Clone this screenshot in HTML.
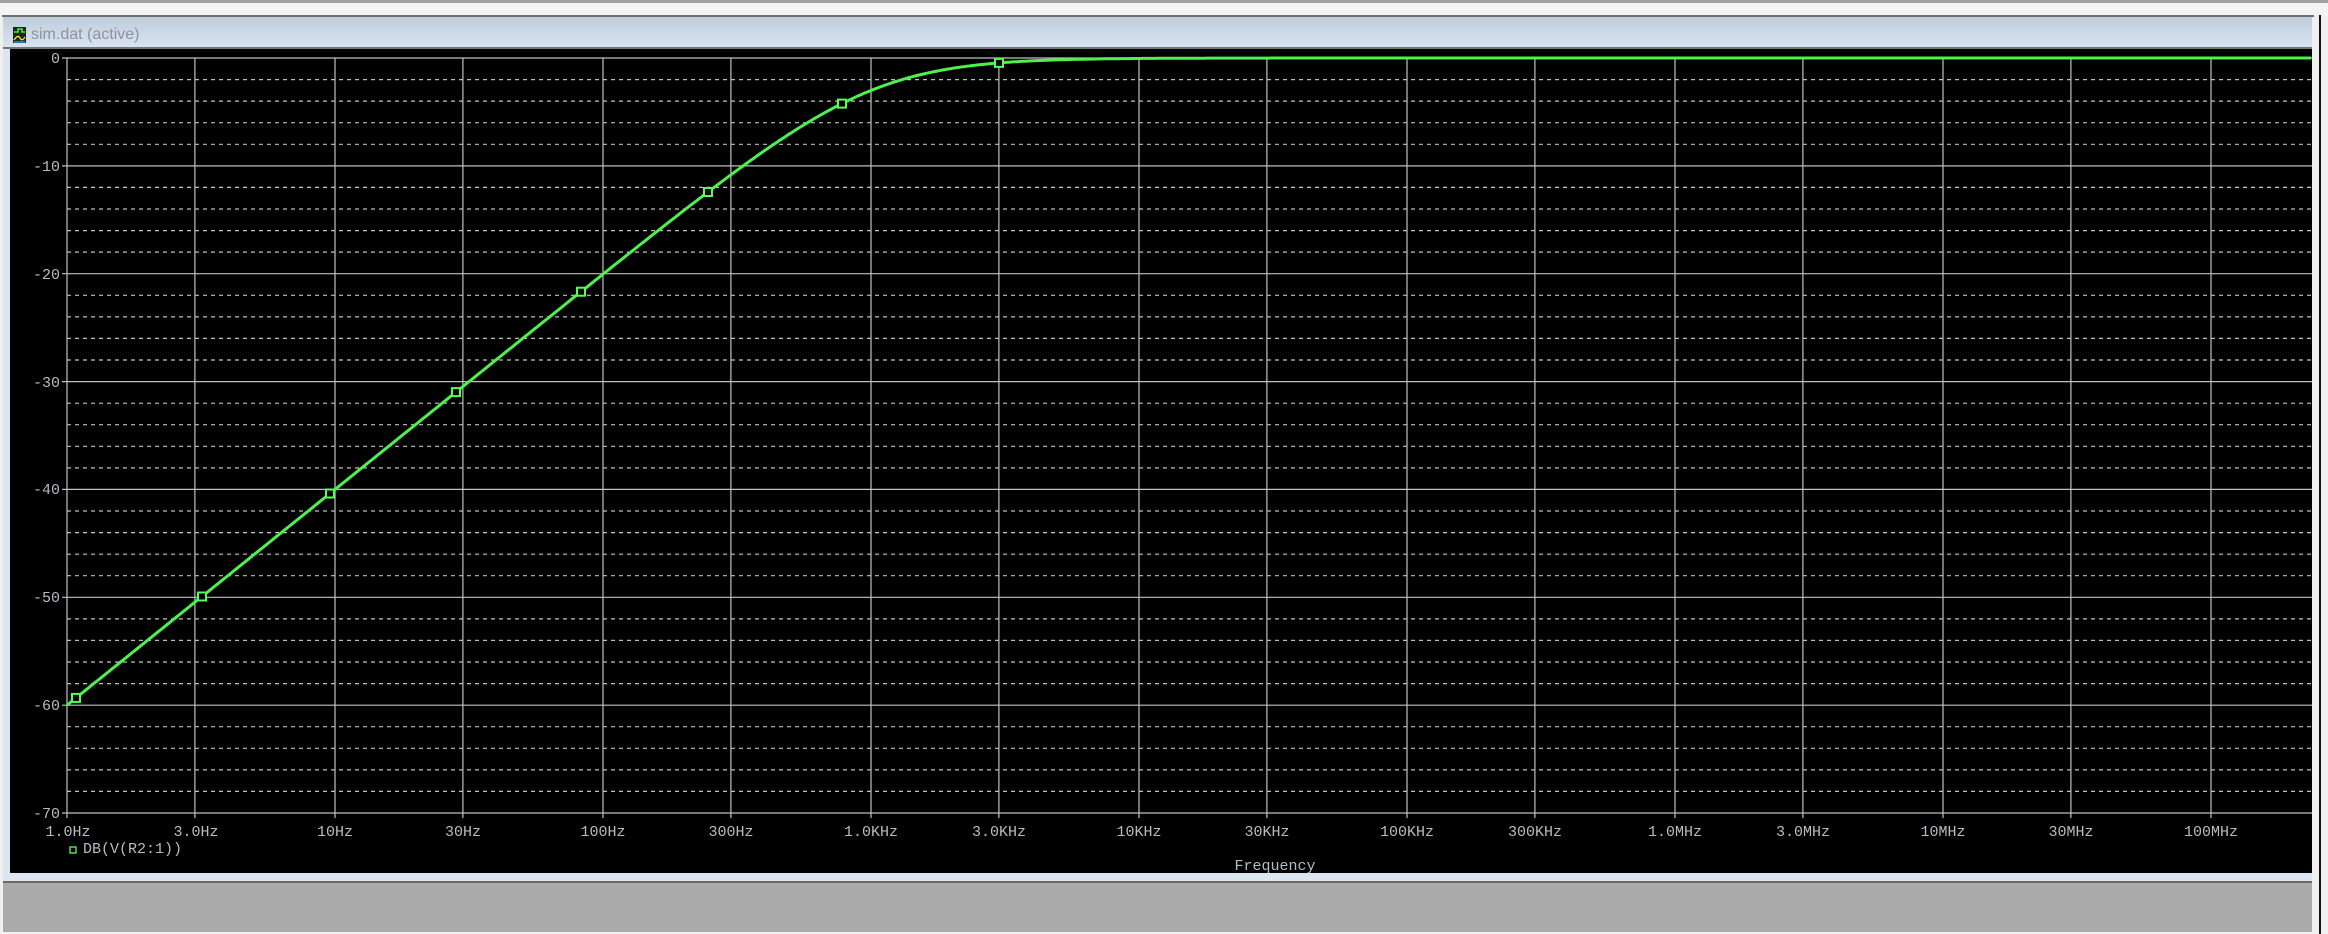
<!DOCTYPE html>
<html><head><style>
html,body{margin:0;padding:0;width:2328px;height:934px;overflow:hidden;background:#f0f0f0;font-family:"Liberation Sans",sans-serif}
</style></head><body>
<svg id="s" width="2328" height="934" xmlns="http://www.w3.org/2000/svg" style="position:absolute;left:0;top:0">
<rect x="0" y="0" width="2328" height="3" fill="#a0a0a0"/>
<rect x="0" y="3" width="2328" height="12" fill="#f4f4f4"/>
<rect x="0" y="15" width="2314" height="919" fill="#f0f0f0"/>
<rect x="2" y="15" width="2312" height="2" fill="#6e6e6e"/>
<defs><linearGradient id="tg" x1="0" y1="0" x2="0" y2="1"><stop offset="0" stop-color="#bfcddb"/><stop offset="1" stop-color="#d9e5f1"/></linearGradient></defs>
<rect x="3" y="17" width="2309" height="32" fill="url(#tg)"/>
<rect x="3" y="47" width="2309" height="2" fill="#777"/>
<rect x="2319" y="15" width="2" height="919" fill="#111"/>
<rect x="2321" y="15" width="7" height="919" fill="#f0f0f0"/>
<rect x="3" y="49" width="7" height="833" fill="#dce6f0"/>
<rect x="10" y="49" width="2302" height="824" fill="#000"/>
<rect x="3" y="873" width="2309" height="8" fill="#dce6f0"/>
<rect x="3" y="881" width="2309" height="2" fill="#6a6a6a"/>
<rect x="3" y="883" width="2309" height="49" fill="#ababab"/>
<g transform="translate(13,27)">
<rect x="0" y="0" width="13" height="16" fill="#222"/>
<path d="M1 5h4v-3h4v3h3" stroke="#3f3" stroke-width="1.5" fill="none"/>
<path d="M1 13q4-6 6-2t5-1" stroke="#ff0" stroke-width="1.2" fill="none"/>
<path d="M1 15h11" stroke="#0cf" stroke-width="1.2"/>
</g>
<text x="31" y="39" font-size="16" fill="#8d939a" font-family="Liberation Sans, sans-serif">sim.dat (active)</text>
<g id="grid"></g>
<g font-family="Liberation Mono, monospace" font-size="15" fill="#b4bcc4">
<text x="60" y="63" text-anchor="end">0</text>
<text x="60" y="171" text-anchor="end">-10</text>
<text x="60" y="279" text-anchor="end">-20</text>
<text x="60" y="387" text-anchor="end">-30</text>
<text x="60" y="494" text-anchor="end">-40</text>
<text x="60" y="602" text-anchor="end">-50</text>
<text x="60" y="710" text-anchor="end">-60</text>
<text x="60" y="818" text-anchor="end">-70</text>
<g text-anchor="middle">
<text x="68" y="836">1.0Hz</text><text x="196" y="836">3.0Hz</text>
<text x="335" y="836">10Hz</text><text x="463" y="836">30Hz</text>
<text x="603" y="836">100Hz</text><text x="731" y="836">300Hz</text>
<text x="871" y="836">1.0KHz</text><text x="999" y="836">3.0KHz</text>
<text x="1139" y="836">10KHz</text><text x="1267" y="836">30KHz</text>
<text x="1407" y="836">100KHz</text><text x="1535" y="836">300KHz</text>
<text x="1675" y="836">1.0MHz</text><text x="1803" y="836">3.0MHz</text>
<text x="1943" y="836">10MHz</text><text x="2071" y="836">30MHz</text>
<text x="2211" y="836">100MHz</text>
<text x="1275" y="870">Frequency</text>
</g>
<text x="83" y="853">DB(V(R2:1))</text>
</g>
<rect x="70" y="847" width="6" height="6" fill="none" stroke="#5f5" stroke-width="1.3"/>
<g id="curve"></g>
</svg>
<script>
var X0=67,D=268,Y0=58,K=10.786,R=2312,B=813;
var g=document.getElementById('grid'),h='';
for(var i=0;i<=35;i++){var y=(Y0+i*K*2).toFixed(1);
 if(i%5==0)h+='<line x1="62" x2="'+R+'" y1="'+y+'" y2="'+y+'" stroke="#c0c0c0" stroke-width="1.2"/>';
 else h+='<line x1="'+X0+'" x2="'+R+'" y1="'+y+'" y2="'+y+'" stroke="#c0c0c0" stroke-width="1.2" stroke-dasharray="4 4"/>';}
for(var d=0;d<9;d++){[1,3].forEach(function(m){var x=X0+D*(d+Math.log10(m));if(x>R)return;
 h+='<line x1="'+x.toFixed(1)+'" x2="'+x.toFixed(1)+'" y1="'+Y0+'" y2="'+(B+5)+'" stroke="#c0c0c0" stroke-width="1.2"/>';});}
g.innerHTML=h;
function yy(f){var db=20*Math.log10(f/Math.sqrt(f*f+1e6));return Y0-db/10*107.86;}
var p='';for(var x=X0;x<=R;x+=2){var f=Math.pow(10,(x-X0)/D);p+=(p?'L':'M')+x+' '+yy(f).toFixed(1);}
var c='<path d="'+p+'" stroke="#4ef04e" stroke-width="3" fill="none"/>';
[76,202,330,456,581,708,842,999].forEach(function(x){var f=Math.pow(10,(x-X0)/D);var y=yy(f);
 c+='<rect x="'+(x-4)+'" y="'+(y-4).toFixed(1)+'" width="8" height="8" fill="#000" stroke="#5f5" stroke-width="2"/>';});
document.getElementById('curve').innerHTML=c;
</script>
</body></html>
